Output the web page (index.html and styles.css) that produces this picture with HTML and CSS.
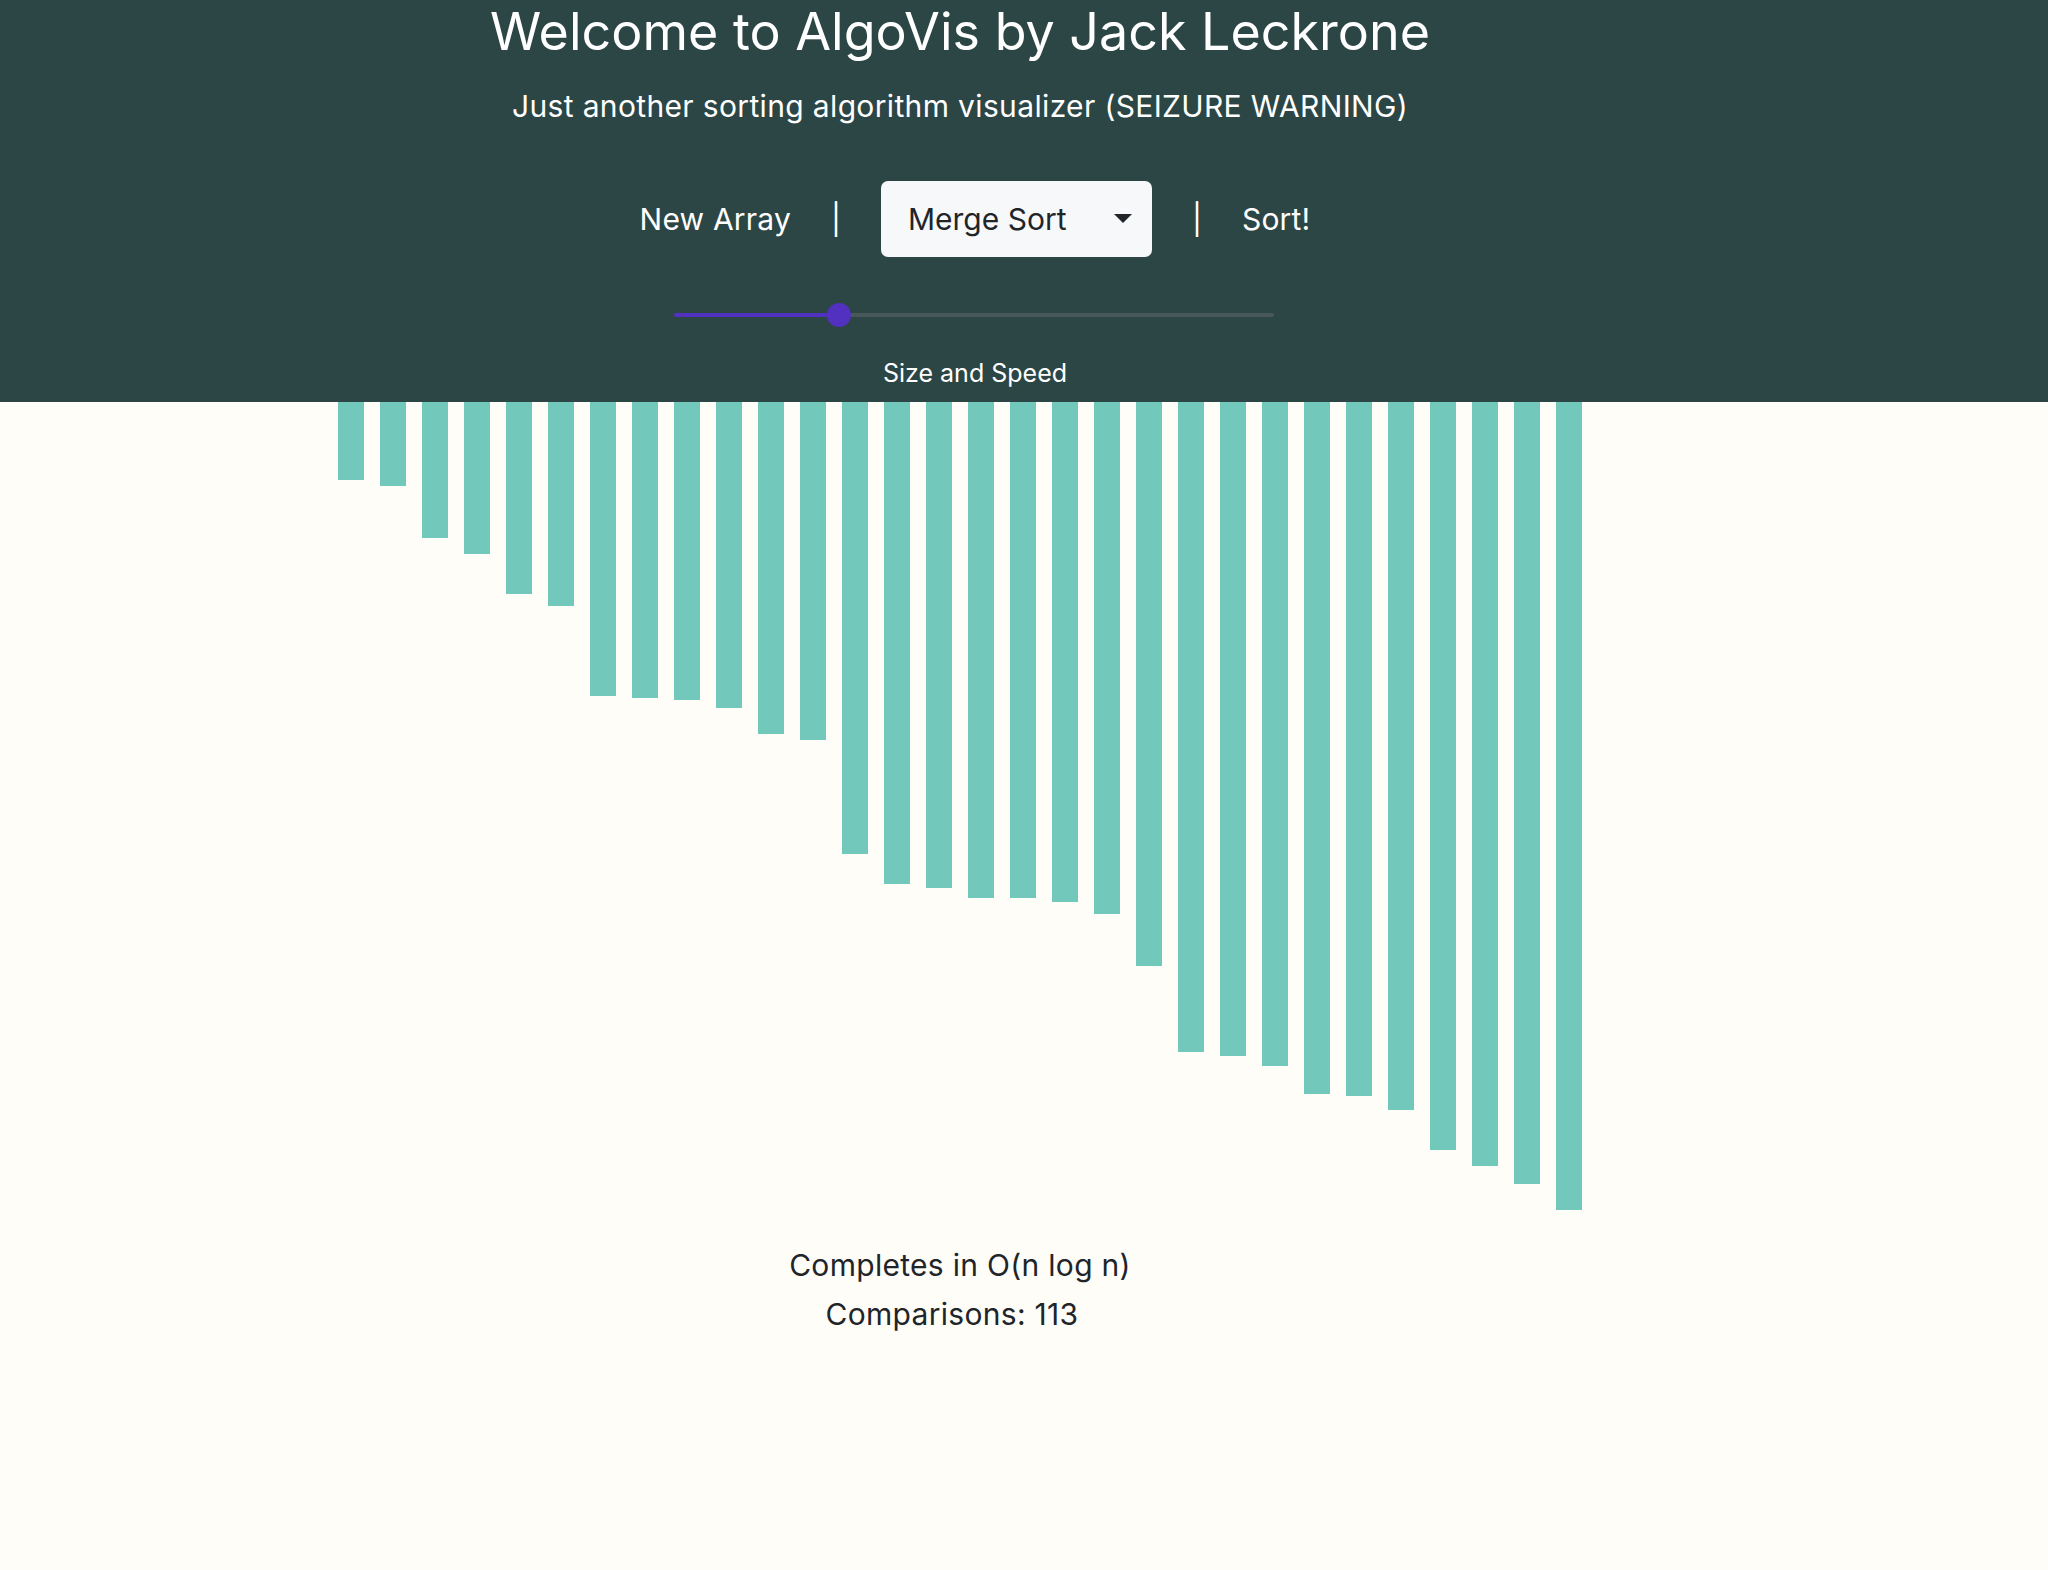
FILE: index.html
```html
<!DOCTYPE html>
<html lang="en">
<head>
<meta charset="utf-8">
<title>AlgoVis</title>
<link rel="stylesheet" href="styles.css">
</head>
<body>
<header class="top">
  <div class="top-inner">
    <h1 class="title">Welcome to AlgoVis by Jack Leckrone</h1>
    <p class="subtitle">Just another sorting algorithm visualizer (SEIZURE WARNING)</p>
    <div class="controls shifted">
      <span class="ctl-link">New Array</span>
      <span class="pipe">|</span>
      <div class="select">
        <span class="select-label">Merge Sort</span>
        <span class="caret"></span>
      </div>
      <span class="pipe">|</span>
      <span class="ctl-link">Sort!</span>
    </div>
    <input class="slider shifted" type="range" min="0" max="1000" value="266" aria-label="Size and Speed">
    <div class="slider-label shifted">Size and Speed</div>
  </div>
</header>
<main class="page">
  <div class="bars">
    <div class="bar" style="height:78px"></div>
    <div class="bar" style="height:84px"></div>
    <div class="bar" style="height:136px"></div>
    <div class="bar" style="height:152px"></div>
    <div class="bar" style="height:192px"></div>
    <div class="bar" style="height:204px"></div>
    <div class="bar" style="height:294px"></div>
    <div class="bar" style="height:296px"></div>
    <div class="bar" style="height:298px"></div>
    <div class="bar" style="height:306px"></div>
    <div class="bar" style="height:332px"></div>
    <div class="bar" style="height:338px"></div>
    <div class="bar" style="height:452px"></div>
    <div class="bar" style="height:482px"></div>
    <div class="bar" style="height:486px"></div>
    <div class="bar" style="height:496px"></div>
    <div class="bar" style="height:496px"></div>
    <div class="bar" style="height:500px"></div>
    <div class="bar" style="height:512px"></div>
    <div class="bar" style="height:564px"></div>
    <div class="bar" style="height:650px"></div>
    <div class="bar" style="height:654px"></div>
    <div class="bar" style="height:664px"></div>
    <div class="bar" style="height:692px"></div>
    <div class="bar" style="height:694px"></div>
    <div class="bar" style="height:708px"></div>
    <div class="bar" style="height:748px"></div>
    <div class="bar" style="height:764px"></div>
    <div class="bar" style="height:782px"></div>
    <div class="bar" style="height:808px"></div>
  </div>
  <div class="stats">
    <div class="stat">Completes in O(n log n)</div>
    <div class="stat stat-count">Comparisons: 113</div>
  </div>
</main>
</body>
</html>
```
FILE: styles.css
```css
html, body {
  margin: 0;
  padding: 0;
}
body {
  background: #fffdf8;
  font-family: "Inter", "Noto Sans", "Liberation Sans", sans-serif;
  color: #212529;
  min-height: 1570px;
}
.top {
  background: #2c4646;
  color: #ffffff;
  padding-bottom: 14px;
}
.top-inner {
  width: 1920px;
  display: flex;
  flex-direction: column;
  align-items: center;
}
.shifted {
  margin-left: 30px;
}
.title {
  margin: 0;
  font-size: 52px;
  line-height: 64px;
  font-weight: 400;
  letter-spacing: 0;
}
.subtitle {
  margin: 22px 0 0 0;
  font-size: 30px;
  line-height: 40px;
  font-weight: 400;
  letter-spacing: 0.35px;
}
.controls {
  margin-top: 55px;
  height: 76px;
  display: flex;
  align-items: center;
  gap: 40px;
  font-size: 30px;
}
.ctl-link {
  color: #ffffff;
  letter-spacing: 0.2px;
}
.pipe {
  color: #ffffff;
}
.select {
  width: 271px;
  height: 76px;
  box-sizing: border-box;
  background: #f7f8fa;
  border-radius: 7px;
  display: flex;
  align-items: center;
  justify-content: space-between;
  padding: 0 20px 0 27px;
  color: #212529;
}
.caret {
  width: 0;
  height: 0;
  border-left: 9px solid transparent;
  border-right: 9px solid transparent;
  border-top: 9px solid #212529;
  margin-top: -2px;
}
.slider {
  -webkit-appearance: none;
  appearance: none;
  display: block;
  width: 600px;
  height: 24px;
  margin-top: 46px;
  margin-bottom: 0;
  padding: 0;
  background: transparent;
}
.slider::-webkit-slider-runnable-track {
  height: 4px;
  border-radius: 2px;
  background: linear-gradient(to right, #5230c0 0%, #5230c0 27.5%, #485757 27.5%, #485757 100%);
}
.slider::-webkit-slider-thumb {
  -webkit-appearance: none;
  appearance: none;
  width: 24px;
  height: 24px;
  border-radius: 50%;
  background: #5230c0;
  border: none;
  margin-top: -10px;
}
.slider:focus {
  outline: none;
}
.slider-label {
  margin-top: 31px;
  font-size: 25px;
  line-height: 30px;
}
.page {
  width: 1920px;
}
.bars {
  display: flex;
  justify-content: center;
  align-items: flex-start;
  gap: 16px;
}
.bar {
  width: 26px;
  background: #73c8bc;
}
.stats {
  margin-top: 32px;
  display: flex;
  flex-direction: column;
  align-items: center;
  font-size: 30px;
  line-height: 46px;
  letter-spacing: 0.3px;
  color: #212529;
}
.stat-count {
  margin-top: 3px;
  margin-right: 16px;
}
```
